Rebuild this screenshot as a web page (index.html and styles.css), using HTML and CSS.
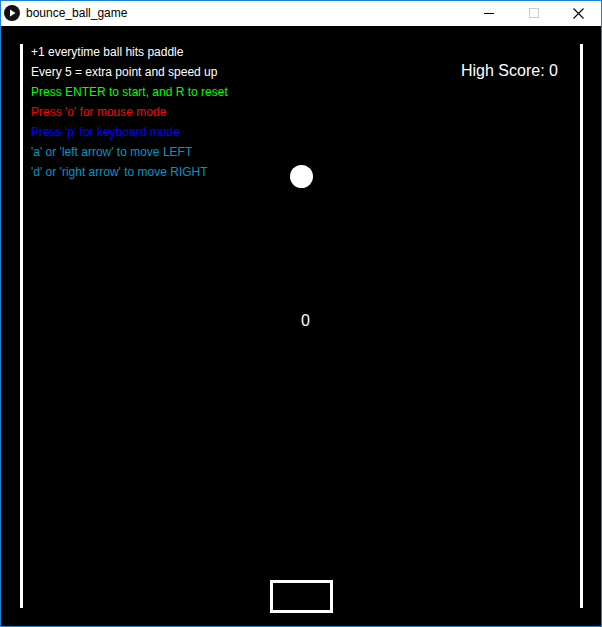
FILE: index.html
```html
<!DOCTYPE html>
<html>
<head>
<meta charset="utf-8">
<title>bounce_ball_game</title>
<link rel="stylesheet" href="styles.css">
</head>
<body>
<div class="window">
  <div class="titlebar">
    <svg class="app-icon" width="16" height="16" viewBox="0 0 16 16">
      <circle cx="8" cy="8" r="8" fill="#111"/>
      <path d="M6 4.5 L11.5 8 L6 11.5 Z" fill="#fff"/>
    </svg>
    <span class="title">bounce_ball_game</span>
    <div class="controls">
      <span class="btn"><svg width="10" height="10" viewBox="0 0 10 10"><path d="M0 5.5 H10" stroke="#000" stroke-width="1"/></svg></span>
      <span class="btn"><svg width="10" height="10" viewBox="0 0 10 10"><rect x="0.5" y="0.5" width="9" height="9" fill="none" stroke="#ccc" stroke-width="1"/></svg></span>
      <span class="btn"><svg width="11" height="11" viewBox="0 0 11 11"><path d="M0.5 0.5 L10.5 10.5 M10.5 0.5 L0.5 10.5" stroke="#000" stroke-width="1.1"/></svg></span>
    </div>
  </div>
  <div class="canvas">
    <div class="wall wall-left"></div>
    <div class="wall wall-right"></div>
    <div class="info">
      <span class="white">+1 everytime ball hits paddle</span>
      <span class="white">Every 5 = extra point and speed up</span>
      <span class="green">Press ENTER to start, and R to reset</span>
      <span class="red">Press 'o' for mouse mode</span>
      <span class="blue">Press 'p' for keyboard mode</span>
      <span class="cyan">'a' or 'left arrow' to move LEFT</span>
      <span class="cyan">'d' or 'right arrow' to move RIGHT</span>
    </div>
    <div class="highscore">High Score: 0</div>
    <div class="ball"></div>
    <div class="score">0</div>
    <div class="paddle"></div>
  </div>
</div>
</body>
</html>
```
FILE: styles.css
```css
html, body {
  margin: 0;
  padding: 0;
  background: #fff;
}
.window {
  width: 602px;
  height: 627px;
  box-sizing: border-box;
  border: 1px solid #1883d7;
  display: flex;
  flex-direction: column;
  background: #fff;
}
.titlebar {
  height: 25px;
  display: flex;
  align-items: center;
  background: #fff;
  font-family: "Liberation Sans", Arial, sans-serif;
  font-size: 12px;
  color: #000;
}
.app-icon {
  margin-left: 3px;
  margin-top: -1px;
}
.title {
  margin-left: 6px;
  margin-top: -1px;
}
.controls {
  margin-left: auto;
  display: flex;
  align-items: center;
  margin-top: -1px;
}
.btn {
  width: 45px;
  height: 25px;
  display: flex;
  align-items: center;
  justify-content: center;
}
.btn svg { display: block; }
.canvas {
  width: 600px;
  height: 600px;
  background: #000;
  position: relative;
  overflow: hidden;
  font-family: "Liberation Sans", Arial, sans-serif;
}
.wall {
  position: absolute;
  top: 18px;
  width: 3px;
  height: 564px;
  background: #fff;
}
.wall-left { left: 19px; }
.wall-right { left: 579px; }
.info {
  position: absolute;
  left: 30px;
  top: 16px;
  display: flex;
  flex-direction: column;
  font-size: 12px;
  line-height: 20px;
  white-space: nowrap;
}
.white { color: #fff; }
.green { color: #00ff00; }
.red { color: #ff0000; }
.blue { color: #0000ff; }
.cyan { color: #0096c8; }
.highscore {
  position: absolute;
  left: 460px;
  top: 35px;
  font-size: 16px;
  line-height: 20px;
  color: #fff;
  white-space: nowrap;
}
.ball {
  position: absolute;
  left: 289px;
  top: 139px;
  width: 23px;
  height: 23px;
  border-radius: 50%;
  background: #fff;
}
.score {
  position: absolute;
  left: 300px;
  top: 285px;
  font-size: 16px;
  line-height: 20px;
  color: #fff;
}
.paddle {
  position: absolute;
  left: 269px;
  top: 554px;
  width: 63px;
  height: 33px;
  box-sizing: border-box;
  border: 3px solid #fff;
}
```
